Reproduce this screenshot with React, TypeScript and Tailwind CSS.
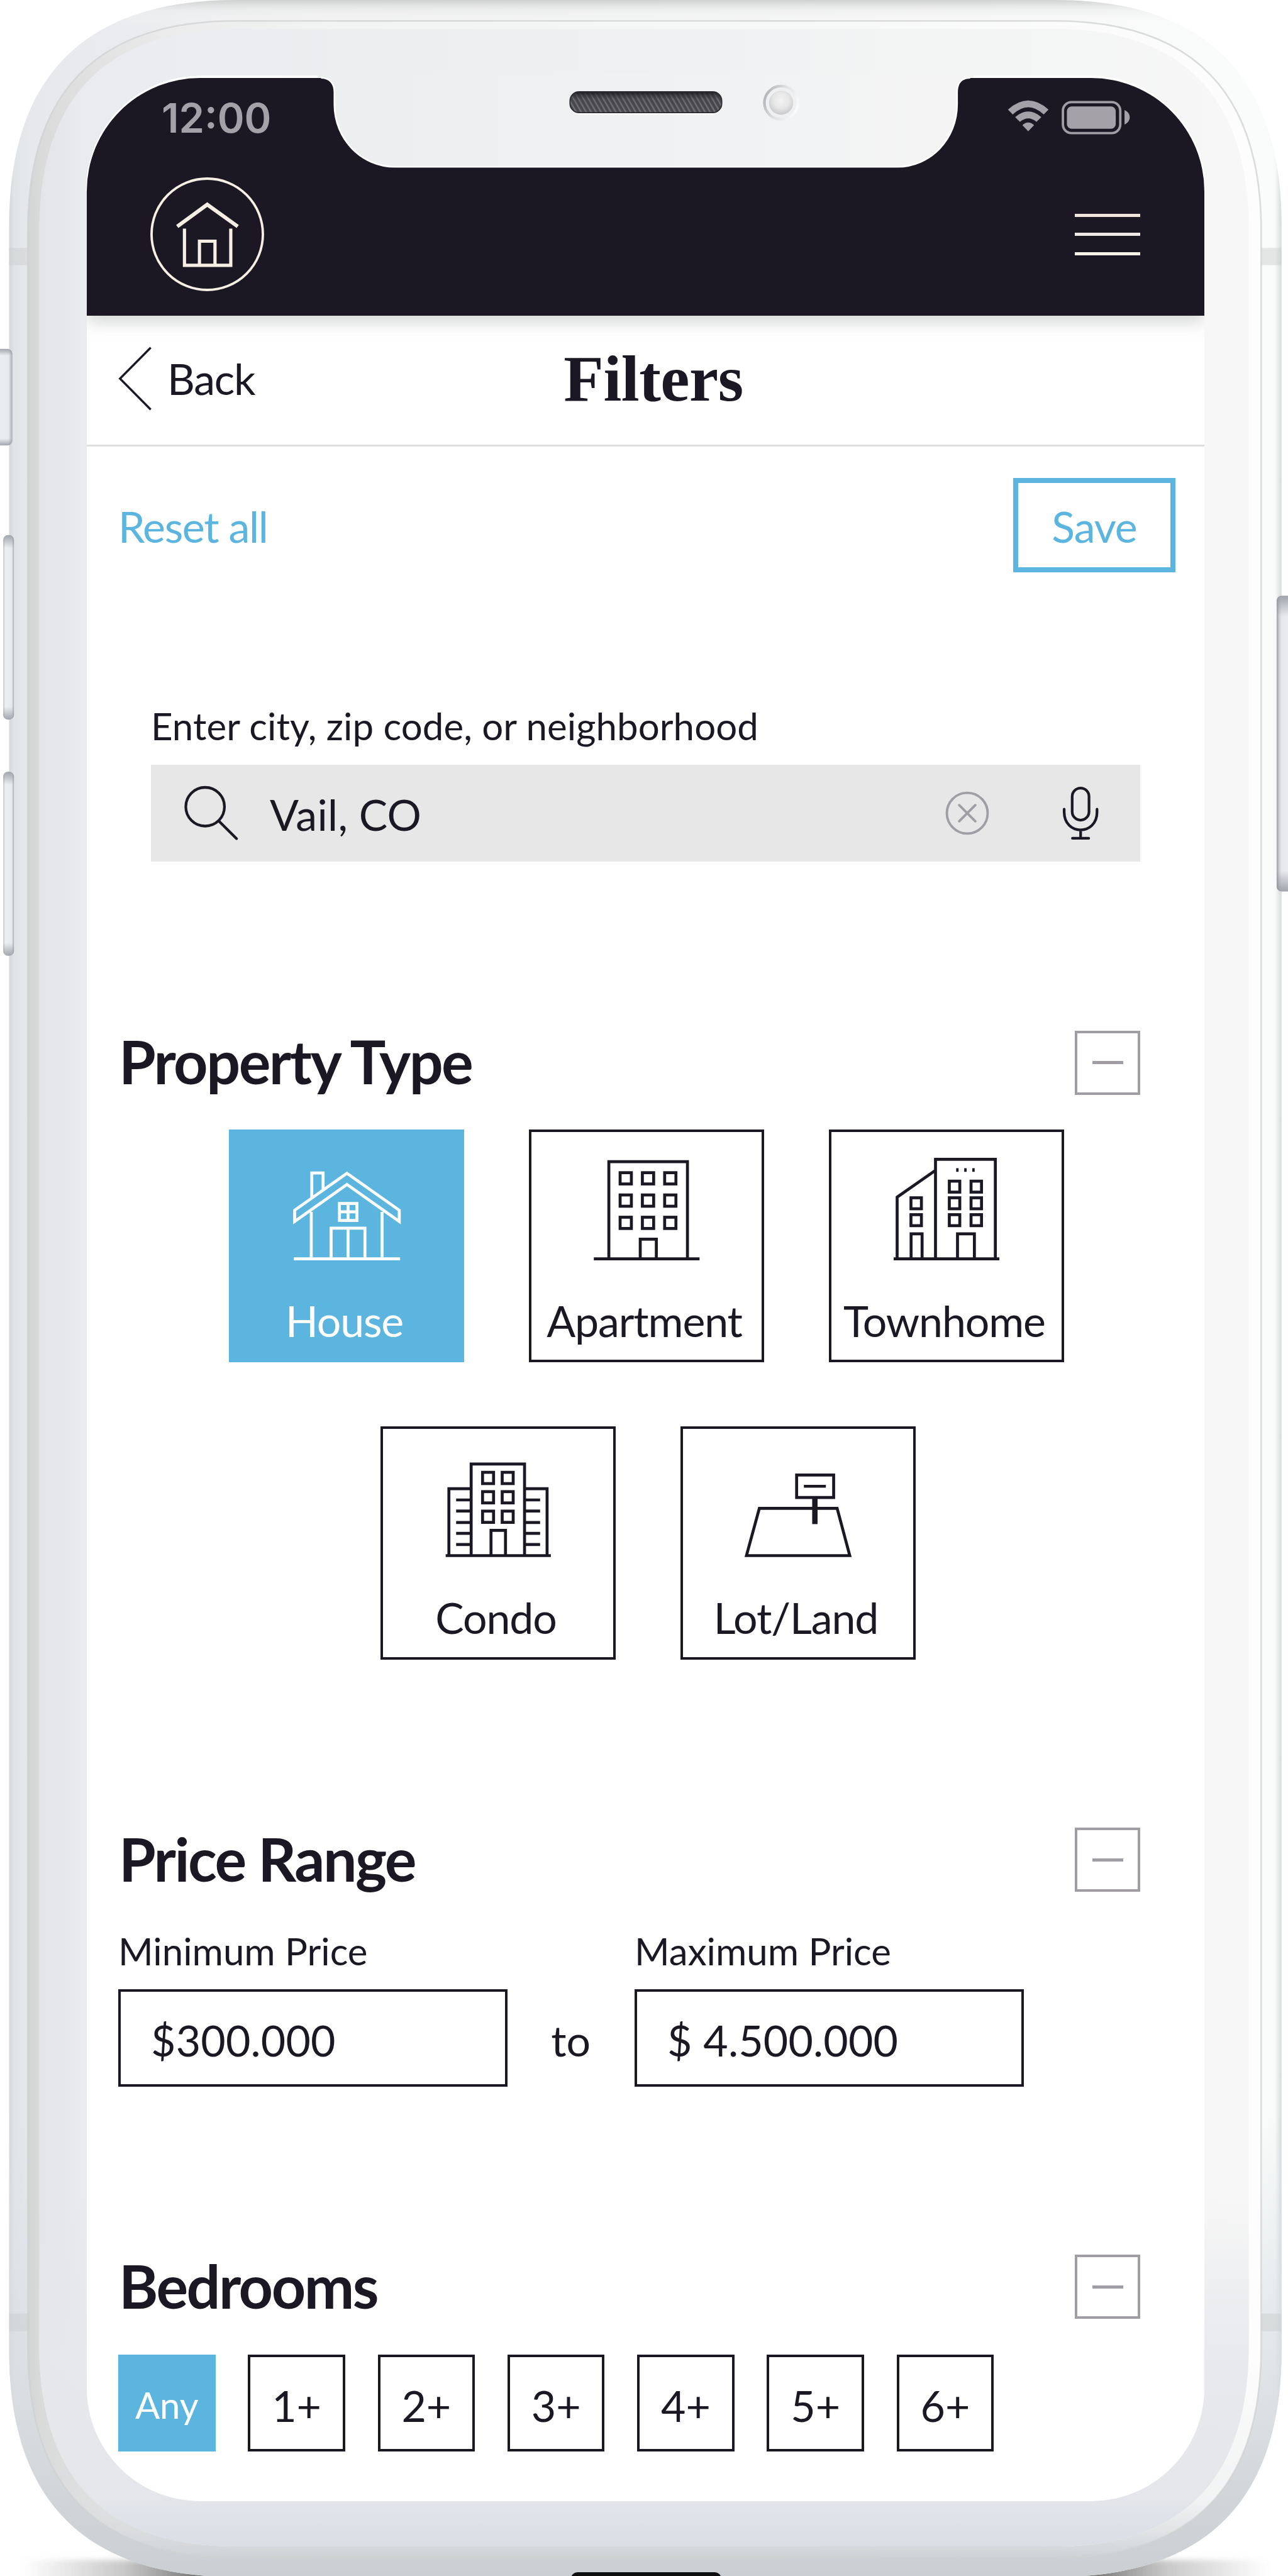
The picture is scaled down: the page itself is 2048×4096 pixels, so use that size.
import type { ReactNode } from "react";

const BODY =
  "M17 420C17 150 150 0 440 0H1965C2255 0 2388 150 2388 420V4380C2388 4650 2255 4802 1965 4802H440C150 4802 17 4650 17 4380Z";
const RING =
  "M52 430C52 176 176 39 440 39H1965C2226 39 2350 176 2350 430V4375C2350 4629 2226 4766 1965 4766H440C176 4766 52 4629 52 4375Z";
const BEZEL =
  "M73 430C73 190 190 54 440 54H1965C2212 54 2327 190 2327 430V4370C2327 4610 2212 4745 1965 4745H440C190 4745 73 4610 73 4370Z";

function SideButton({ x, y, w, h, id }: { x: number; y: number; w: number; h: number; id: string }) {
  return (
    <g>
      <rect x={x} y={y} width={w} height={h} rx={9} fill={`url(#${id})`} />
      <rect x={x} y={y} width={w} height={h} rx={9} fill="url(#buttonEnds)" />
    </g>
  );
}

function PhoneFrame() {
  return (
    <svg className="absolute inset-0 h-[4096px] w-[2048px]" viewBox="0 0 2400 4800" aria-hidden="true">
      <defs>
        <linearGradient id="bodyX" x1="17" x2="2388" y1="0" y2="0" gradientUnits="userSpaceOnUse">
          <stop offset="0" stopColor="#d3d7da" />
          <stop offset="0.004" stopColor="#e2e5e8" />
          <stop offset="0.016" stopColor="#e6e8ec" />
          <stop offset="0.2" stopColor="#f0f0f1" />
          <stop offset="0.8" stopColor="#f7f8f7" />
          <stop offset="0.985" stopColor="#fafcfb" />
          <stop offset="0.995" stopColor="#f8faf9" />
          <stop offset="1" stopColor="#d7dadb" />
        </linearGradient>
        <linearGradient id="bodyY" x1="0" x2="0" y1="0" y2="4800" gradientUnits="userSpaceOnUse">
          <stop offset="0" stopColor="#c9caca" stopOpacity="0.85" />
          <stop offset="0.004" stopColor="#e9eaea" stopOpacity="0.5" />
          <stop offset="0.01" stopColor="#ffffff" stopOpacity="0" />
          <stop offset="0.82" stopColor="#dde0e5" stopOpacity="0" />
          <stop offset="0.92" stopColor="#d8dce1" stopOpacity="0.75" />
          <stop offset="0.97" stopColor="#d1d5da" />
          <stop offset="1" stopColor="#cbcfd3" />
        </linearGradient>
        <linearGradient id="ringX" x1="52" x2="2350" y1="0" y2="0" gradientUnits="userSpaceOnUse">
          <stop offset="0" stopColor="#d3d4d4" />
          <stop offset="0.01" stopColor="#dadada" />
          <stop offset="0.12" stopColor="#ececec" />
          <stop offset="0.25" stopColor="#f2f3f3" />
          <stop offset="1" stopColor="#fdfdfd" />
        </linearGradient>
        <linearGradient id="ringY" x1="0" x2="0" y1="4400" y2="4766" gradientUnits="userSpaceOnUse">
          <stop offset="0" stopColor="#d2d5d8" stopOpacity="0" />
          <stop offset="0.7" stopColor="#d9dcde" stopOpacity="0.3" />
          <stop offset="1" stopColor="#cfd2d6" />
        </linearGradient>
        <linearGradient id="bezelX" x1="73" x2="2327" y1="0" y2="0" gradientUnits="userSpaceOnUse">
          <stop offset="0" stopColor="#e2e4e8" />
          <stop offset="0.04" stopColor="#e9ebef" />
          <stop offset="0.25" stopColor="#edeef0" />
          <stop offset="0.5" stopColor="#eff0f1" />
          <stop offset="0.75" stopColor="#f3f4f4" />
          <stop offset="1" stopColor="#f7f7f7" />
        </linearGradient>
        <linearGradient id="bezelY" x1="0" x2="0" y1="4100" y2="4745" gradientUnits="userSpaceOnUse">
          <stop offset="0" stopColor="#e4e6ea" stopOpacity="0" />
          <stop offset="0.45" stopColor="#e6e8ec" stopOpacity="0.9" />
          <stop offset="0.85" stopColor="#e4e6eb" />
          <stop offset="1" stopColor="#d9dde5" />
        </linearGradient>
        <linearGradient id="leftButton" x1="0" x2="1" y1="0" y2="0">
          <stop offset="0" stopColor="#c3c6cb" />
          <stop offset="0.2" stopColor="#edeff2" />
          <stop offset="0.8" stopColor="#e6e9ed" />
          <stop offset="1" stopColor="#a9aeb5" />
        </linearGradient>
        <linearGradient id="rightButton" x1="0" x2="1" y1="0" y2="0">
          <stop offset="0" stopColor="#999ca2" />
          <stop offset="0.12" stopColor="#c9cbd0" />
          <stop offset="0.25" stopColor="#e6e7eb" />
          <stop offset="1" stopColor="#eeeff3" />
        </linearGradient>
        <linearGradient id="buttonEnds" x1="0" x2="0" y1="0" y2="1">
          <stop offset="0" stopColor="#8e939b" stopOpacity="0.8" />
          <stop offset="0.07" stopColor="#8e939b" stopOpacity="0" />
          <stop offset="0.93" stopColor="#8e939b" stopOpacity="0" />
          <stop offset="1" stopColor="#8e939b" stopOpacity="0.8" />
        </linearGradient>
        <linearGradient id="floorL" x1="40" x2="420" y1="0" y2="0" gradientUnits="userSpaceOnUse">
          <stop offset="0" stopColor="#777" stopOpacity="0" />
          <stop offset="0.5" stopColor="#777" stopOpacity="0.4" />
          <stop offset="1" stopColor="#444" stopOpacity="0.95" />
        </linearGradient>
        <linearGradient id="floorR" x1="2365" x2="1985" y1="0" y2="0" gradientUnits="userSpaceOnUse">
          <stop offset="0" stopColor="#777" stopOpacity="0" />
          <stop offset="0.5" stopColor="#777" stopOpacity="0.4" />
          <stop offset="1" stopColor="#444" stopOpacity="0.95" />
        </linearGradient>
        <filter id="soft" x="-10%" y="-60%" width="120%" height="220%">
          <feGaussianBlur stdDeviation="5" />
        </filter>
      </defs>
      <rect x="40" y="4770" width="400" height="60" fill="url(#floorL)" filter="url(#soft)" />
      <rect x="1965" y="4770" width="400" height="60" fill="url(#floorR)" filter="url(#soft)" />
      <path d={BODY} fill="url(#bodyX)" />
      <path d={BODY} fill="url(#bodyY)" />
      <SideButton x={-12} y={650} w={35} h={180} id="leftButton" />
      <SideButton x={6} y={997} w={20} h={344} id="leftButton" />
      <SideButton x={6} y={1438} w={20} h={343} id="leftButton" />
      <SideButton x={2379} y={1110} w={34} h={551} id="rightButton" />
      <g fill="#c9cccd" fillOpacity="0.45">
        <rect x="17" y="462" width="37" height="32" />
        <rect x="2344" y="462" width="44" height="32" />
        <rect x="17" y="4311" width="37" height="33" />
        <rect x="2344" y="4311" width="44" height="33" />
      </g>
      <path d={RING} fill="url(#ringX)" />
      <path d={RING} fill="url(#ringY)" stroke="#cfd0d1" strokeOpacity="0.75" strokeWidth="3" />
      <path d={BEZEL} fill="url(#bezelX)" />
      <path d={BEZEL} fill="url(#bezelY)" />
      <path d="M163 356A211 211 0 0 1 374 144H2032A211 211 0 0 1 2243 356" fill="none" stroke="#fff" strokeWidth="6" />
      <rect x="1064" y="4793" width="280" height="30" rx="12" fill="#0d0d0f" />
    </svg>
  );
}

function Notch() {
  return (
    <svg className="absolute left-0 top-0 h-[273px] w-[2048px]" viewBox="0 0 2400 320" aria-hidden="true">
      <defs>
        <linearGradient id="notchX" x1="73" x2="2327" y1="0" y2="0" gradientUnits="userSpaceOnUse">
          <stop offset="0.25" stopColor="#edeef0" />
          <stop offset="0.5" stopColor="#eff1f3" />
          <stop offset="0.75" stopColor="#f4f4f4" />
        </linearGradient>
        <linearGradient id="speakerShade" x1="0" x2="0" y1="0" y2="1">
          <stop offset="0" stopColor="#1c1b22" stopOpacity="0.95" />
          <stop offset="0.35" stopColor="#2f2e35" stopOpacity="0.2" />
          <stop offset="1" stopColor="#3a393f" stopOpacity="0.1" />
        </linearGradient>
        <pattern id="mesh" width="8" height="8" patternUnits="userSpaceOnUse" patternTransform="rotate(-30)">
          <rect width="8" height="8" fill="#4b4a50" />
          <rect width="3" height="8" fill="#77767b" />
        </pattern>
        <radialGradient id="lens" cx="0.5" cy="0.4" r="0.6">
          <stop offset="0" stopColor="#f4f4f4" />
          <stop offset="0.55" stopColor="#e6e6e7" />
          <stop offset="1" stopColor="#c9c9cb" />
        </radialGradient>
        <linearGradient id="lensRim" x1="0" x2="1" y1="0.3" y2="0.7">
          <stop offset="0" stopColor="#b4b5b8" />
          <stop offset="0.5" stopColor="#e2e3e5" />
          <stop offset="1" stopColor="#fbfbfb" />
        </linearGradient>
      </defs>
      <path
        d="M592 138V145H598C614 145 623 155 623 172V195C623 259 673 311 736 311H1672C1734 311 1783.500 259 1783.500 195V172C1783.500 155 1792 145 1808 145H1814V138Z"
        fill="url(#notchX)"
      />
      <path
        d="M598 145C614 145 623 155 623 172V195C623 259 673 311 736 311H1672C1734 311 1783.500 259 1783.500 195V172C1783.500 155 1792 145 1808 145"
        fill="none"
        stroke="#fff"
        strokeWidth="3"
      />
      <rect x="1061" y="172" width="285" height="41" rx="18" fill="#fff" />
      <rect x="1062" y="171" width="283" height="39" rx="17" fill="url(#mesh)" />
      <rect x="1062" y="171" width="283" height="39" rx="17" fill="url(#speakerShade)" stroke="#2b2a31" strokeWidth="2" />
      <circle cx="1455.500" cy="191.500" r="31" fill="#eff0f1" stroke="url(#lensRim)" strokeWidth="5" />
      <circle cx="1455.500" cy="191.500" r="22.500" fill="url(#lens)" />
    </svg>
  );
}

function StatusIcons() {
  return (
    <svg className="h-[56px] w-[198px]" viewBox="1875 188 232 66" fill="none" aria-hidden="true">
      <g fill="#a4a2a8">
        <path d="M1877.500 206Q1915.500 172 1953.500 206L1944.500 215Q1915.500 188 1886.500 215Z" />
        <path d="M1891 220Q1915.500 199 1940 220L1931 229Q1915.500 216 1900 229Z" />
        <path d="M1904.500 235Q1915.500 225 1926.500 235L1915.500 246.500Z" />
        <rect x="1988" y="200" width="91.500" height="42" rx="9" />
        <path d="M2096 207C2109 213 2109 228 2096 234Z" />
      </g>
      <rect x="1980.500" y="192" width="107.500" height="58" rx="16" stroke="#a09da4" strokeWidth="4.500" />
    </svg>
  );
}

function HomeLogo() {
  return (
    <svg className="h-[183px] w-[183px]" viewBox="279 330 215 215" fill="none" stroke="#f8efe4" aria-hidden="true">
      <circle cx="386.500" cy="437.500" r="104" strokeWidth="4.500" />
      <path d="M330.500 423L386.500 382L443.500 423" strokeWidth="7" />
      <path d="M344 427V495.500H430.500V427M372 495V450.500H401V495" strokeWidth="6" />
    </svg>
  );
}

function MenuIcon() {
  return (
    <div className="flex w-[104px] flex-col gap-[25.500px]">
      <div className="h-[5px] bg-[#f0e4df]" />
      <div className="h-[5px] bg-[#f2eae6]" />
      <div className="h-[5px] bg-[#f8f1e6]" />
    </div>
  );
}

function Collapse() {
  return (
    <div className="flex h-[102px] w-[104px] items-center justify-center border-[4px] border-[#a09ea4]">
      <div className="h-[5px] w-[49px] bg-[#a09ea4]" />
    </div>
  );
}

function SectionHeader({ title }: { title: string }) {
  return (
    <div className="flex h-[102px] items-center justify-between pl-[51px] pr-[102px]">
      <h2 className="-mt-[5px] text-[95px] font-bold leading-[100px] tracking-[-2.500px]">{title}</h2>
      <Collapse />
    </div>
  );
}

const windows = (xs: number[], ys: number[], w = 21, h = 21) =>
  xs.flatMap((x) => ys.map((y) => <rect key={`${x}-${y}`} x={x - w / 2} y={y - h / 2} width={w} height={h} />));

const house = (
  <>
    <path d="M548 2345.500H746M580.500 2345V2258M712.500 2345V2258" />
    <path d="M549.500 2255L647 2186L744.500 2255V2276L647 2207L549.500 2276Z" />
    <path d="M581.500 2231V2185.500H602.500V2216" />
    <path d="M633 2242.500H665.500V2274H633ZM649 2242V2274M633 2258H665.500" />
    <path d="M617.500 2345V2288.500H680.500V2345M649 2288V2345" />
  </>
);
const apartment = (
  <>
    <path d="M1107 2345.500H1304M1135 2345V2164.500H1281.500V2345M1193.500 2345V2309H1223.500V2345" />
    {windows([1166.5, 1208, 1249.5], [2195.5, 2237, 2278.5])}
  </>
);
const townhome = (
  <>
    <path d="M1666 2345.500H1863M1744 2345V2160H1855.500V2345M1672.500 2345V2230.500L1744 2180.500" />
    <path d="M1698.500 2345V2299H1719V2345M1785 2345V2299H1816.500V2345" />
    {windows([1708], [2242, 2273.5], 19.5, 20.5)}
    {windows([1779.5, 1820], [2211, 2242, 2273.5], 19.5, 20.5)}
    <path d="M1782.500 2180H1787M1797.500 2180H1802M1812.500 2180H1817" strokeWidth="6.500" />
  </>
);
const condo = (
  <>
    <path d="M831 2899.700H1027M878.500 2899V2729H978V2899M878 2775H837V2899M978 2775H1020V2899" />
    <path d="M850.500 2796H878M850.500 2816.700H878M850.500 2838H878M850.500 2858.300H878M850.500 2879H878" />
    <path d="M978 2796H1007M978 2816.700H1007M978 2838H1007M978 2858.300H1007M978 2879H1007" />
    <path d="M915.500 2899V2852.700H942.500V2899" />
    {windows([910, 946.6], [2755, 2791, 2827.3], 20.5, 21)}
  </>
);
const lot = (
  <>
    <path d="M1415 2811.700H1560L1583.500 2899.700H1391Z" />
    <path d="M1484.500 2749.500H1553.500V2791.500H1484.500ZM1498 2770.500H1539" />
    <path d="M1518.500 2791V2841" strokeWidth="10" />
  </>
);

function TypeCard({ label, viewBox, active, children }: { label: string; viewBox: string; active?: boolean; children: ReactNode }) {
  return (
    <div
      className={
        active
          ? "flex h-[370.500px] w-[374px] flex-col items-center border-[4px] border-[#5cb5df] bg-[#5cb5df] text-white"
          : "flex h-[370.500px] w-[374px] flex-col items-center border-[4px] border-[#1b1824] text-[#1b1824]"
      }
    >
      <svg className="h-[217px] w-[366px] shrink-0" viewBox={viewBox} fill="none" stroke="currentColor" strokeWidth="5.500" aria-hidden="true">
        {children}
      </svg>
      <span className="mr-[7px] mt-[43px] whitespace-nowrap text-[68px] leading-[80px] tracking-[-1.100px]">{label}</span>
    </div>
  );
}

function PriceField({ label, value }: { label: string; value: string }) {
  return (
    <div className="w-[618.500px]">
      <div className="text-[60px] leading-[72px]">{label}</div>
      <div className="mt-[25.500px] flex h-[154.500px] items-center border-[4px] border-[#1b1824] pl-[48px] pt-[8px] text-[68px] leading-[80px] tracking-[0.200px]">
        {value}
      </div>
    </div>
  );
}

const bedrooms = ["1+", "2+", "3+", "4+", "5+", "6+"];

export default function App() {
  return (
    <div className="relative h-[4096px] w-[2048px] overflow-hidden bg-white pl-[138px] pt-[124px] font-['Lato',sans-serif] text-[#1b1824]">
      <PhoneFrame />
      <main className="relative h-[3853px] w-[1777px] overflow-hidden rounded-[180px] bg-white">
        <header className="h-[378px] bg-[#1b1824] shadow-[0_10px_26px_rgba(60,64,64,0.22)]">
          <div className="flex h-[126px] items-center justify-between pl-[119px] pr-[117px]">
            <span className="font-['Inter',sans-serif] text-[65px] font-semibold leading-none tracking-[0px] text-[#a4a2a8]">12:00</span>
            <StatusIcons />
          </div>
          <div className="flex h-[252px] items-center justify-between pb-[7px] pl-[100px] pr-[102px]">
            <HomeLogo />
            <MenuIcon />
          </div>
        </header>

        <div className="grid h-[208px] grid-cols-3 items-center border-b-[3px] border-[#dddedf] pb-[5px]">
          <div className="flex items-center pl-[50px]">
            <svg className="h-[102px] w-[54px]" viewBox="221 647 63 120" fill="none" stroke="#1b1824" strokeWidth="4" aria-hidden="true">
              <path d="M281.500 649L224 707L281.500 765" />
            </svg>
            <span className="ml-[24px] text-[68px] leading-[80px] tracking-[-1.200px]">Back</span>
          </div>
          <h1 className="ml-[25px] text-center font-['Liberation_Serif',serif] text-[104px] font-bold leading-[110px] tracking-[-0.500px]">Filters</h1>
        </div>

        <div className="flex items-center justify-between pl-[50px] pr-[46px] pt-[50px] text-[68px] leading-[80px] text-[#5cb5df]">
          <span className="pt-[4px] tracking-[-1.300px]">Reset all</span>
          <div className="flex h-[150px] w-[258px] items-center justify-center border-[8px] border-[#5cb5df] pt-[4px] tracking-[-1px]">Save</div>
        </div>

        <section className="mt-[208px] pl-[102px] pr-[102px]">
          <div className="text-[60px] leading-[72px] tracking-[0.060px]">Enter city, zip code, or neighborhood</div>
          <div className="mt-[26px] flex h-[154px] items-center bg-[#e7e7e7] pl-[52px] pr-[64px]">
            <svg className="h-[90px] w-[88px]" viewBox="342 1465 103 105" fill="none" stroke="#1b1824" strokeWidth="5" strokeLinecap="round" aria-hidden="true">
              <circle cx="382" cy="1505.500" r="36" />
              <path d="M407.500 1532L440.500 1565" />
            </svg>
            <span className="ml-[49px] flex-1 pt-[3px] text-[68px] leading-[80px] tracking-[0.300px]">Vail, CO</span>
            <svg className="h-[70px] w-[70px]" viewBox="1761 1475 82 82" fill="none" stroke="#a09ea4" strokeWidth="4.500" strokeLinecap="round" aria-hidden="true">
              <circle cx="1802" cy="1516" r="38" />
              <path d="M1787 1501L1817 1531M1817 1501L1787 1531" />
            </svg>
            <svg className="ml-[114px] h-[90px] w-[62px]" viewBox="1977 1465 73 105" fill="none" stroke="#1b1824" strokeWidth="5" strokeLinecap="round" aria-hidden="true">
              <rect x="1998" y="1470.500" width="31.500" height="60" rx="15.750" />
              <path d="M1983 1510V1515.500C1983 1560 2044.500 1560 2044.500 1515.500V1510M2013.800 1549V1564M1998.500 1564.500H2029" />
            </svg>
          </div>
        </section>

        <section className="mt-[268.500px]">
          <SectionHeader title="Property Type" />
          <div className="mt-[55px] flex gap-[103px] pl-[226px]">
            <TypeCard label="House" viewBox="431.7 2109.4 429 254" active>{house}</TypeCard>
            <TypeCard label="Apartment" viewBox="990.7 2109.4 429 254">{apartment}</TypeCard>
            <TypeCard label="Townhome" viewBox="1550 2109.4 429 254">{townhome}</TypeCard>
          </div>
          <div className="mt-[102px] flex gap-[103px] pl-[467px]">
            <TypeCard label="Condo" viewBox="714.2 2663.700 429 254">{condo}</TypeCard>
            <TypeCard label="Lot/Land" viewBox="1272.7 2663.700 429 254">{lot}</TypeCard>
          </div>
        </section>

        <section className="mt-[267.500px]">
          <SectionHeader title="Price Range" />
          <div className="mt-[57.500px] flex items-end pl-[50px]">
            <PriceField label="Minimum Price" value="$300.000" />
            <div className="flex h-[154.500px] w-[202.500px] items-center justify-center pt-[8px] text-[68px] leading-[80px]">to</div>
            <PriceField label="Maximum Price" value="$ 4.500.000" />
          </div>
        </section>

        <section className="mt-[267.500px]">
          <SectionHeader title="Bedrooms" />
          <div className="mt-[56.500px] flex gap-[51.700px] pl-[50px]">
            <div className="flex h-[154.500px] w-[154.600px] items-center justify-center bg-[#5cb5df] pt-[6px] text-[58px] leading-[72px] text-white">Any</div>
            {bedrooms.map((b) => (
              <div key={b} className="flex h-[154.500px] w-[154.600px] items-center justify-center border-[4px] border-[#1b1824] pt-[9px] text-[68px] leading-[80px]">
                {b}
              </div>
            ))}
          </div>
        </section>
      </main>
      <Notch />
    </div>
  );
}
